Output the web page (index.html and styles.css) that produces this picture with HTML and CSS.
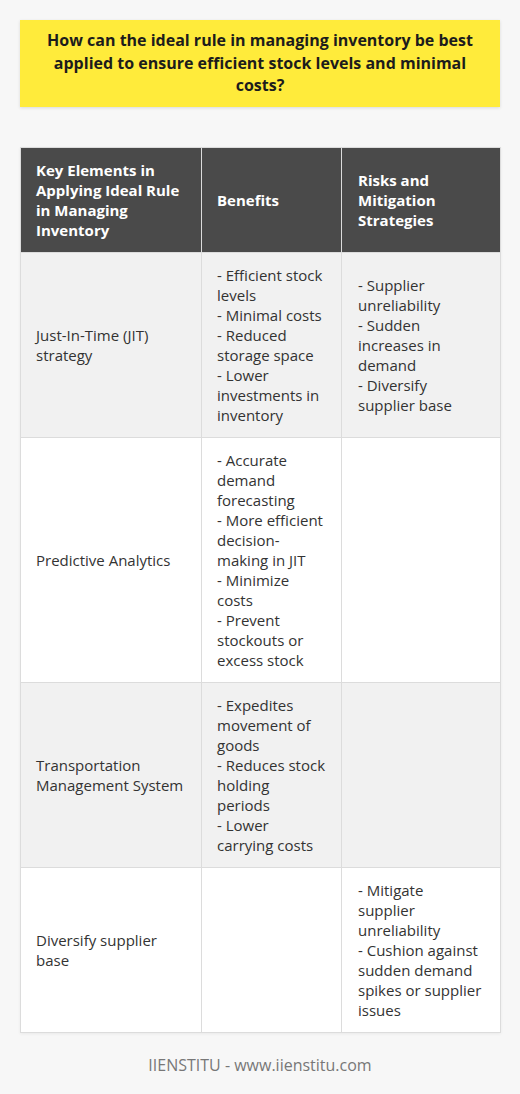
FILE: index.html
```html
<!DOCTYPE html>
<html>
<head>
<meta charset="utf-8">
<link rel="stylesheet" href="styles.css">
</head>
<body>
<div class="page">
  <div class="title">How can the ideal rule in managing inventory be best applied to ensure efficient stock levels and minimal costs?</div>
  <table class="grid">
    <colgroup>
      <col class="c1"><col class="c2"><col class="c3">
    </colgroup>
    <thead>
      <tr>
        <th>Key Elements in Applying Ideal Rule in Managing Inventory</th>
        <th>Benefits</th>
        <th>Risks and Mitigation Strategies</th>
      </tr>
    </thead>
    <tbody>
      <tr class="alt">
        <td>Just-In-Time (JIT) strategy</td>
        <td>- Efficient stock levels<br>- Minimal costs<br>- Reduced storage space<br>- Lower investments in inventory</td>
        <td>- Supplier unreliability<br>- Sudden increases in demand<br>- Diversify supplier base</td>
      </tr>
      <tr>
        <td>Predictive Analytics</td>
        <td>- Accurate demand forecasting<br>- More efficient decision-making in JIT<br>- Minimize costs<br>- Prevent stockouts or excess stock</td>
        <td></td>
      </tr>
      <tr class="alt">
        <td>Transportation Management System</td>
        <td>- Expedites movement of goods<br>- Reduces stock holding periods<br>- Lower carrying costs</td>
        <td></td>
      </tr>
      <tr>
        <td>Diversify supplier base</td>
        <td></td>
        <td>- Mitigate supplier unreliability<br>- Cushion against sudden demand spikes or supplier issues</td>
      </tr>
    </tbody>
  </table>
  <div class="footer">IIENSTITU - www.iienstitu.com</div>
</div>
</body>
</html>
```

FILE: styles.css
```css
html, body {
  margin: 0;
  padding: 0;
  background: #f7f7f7;
}
body {
  font-family: "Open Sans", "Liberation Sans", sans-serif;
  color: #333;
}
.page {
  width: 480px;
  padding: 20px 20px 0;
  display: flex;
  flex-direction: column;
}
.title {
  background: #ffeb3b;
  color: #1c1c1c;
  font-weight: 700;
  font-size: 16px;
  line-height: 22.5px;
  text-align: center;
  padding: 9px 20px 10px;
  box-shadow: 0 1px 3px rgba(0,0,0,0.12);
}
.grid {
  margin-top: 40px;
  width: 480px;
  border-collapse: collapse;
  table-layout: fixed;
  font-size: 15px;
  line-height: 20px;
  box-shadow: 0 1px 3px rgba(0,0,0,0.06);
}
.c1 { width: 181px; }
.c2 { width: 140px; }
.c3 { width: 159px; }
.grid th, .grid td {
  border: 1px solid #dcdcdc;
  padding: 12px 15px;
  text-align: left;
  vertical-align: middle;
}
.grid th:nth-child(3), .grid td:nth-child(3) {
  padding-left: 16px;
  padding-right: 18px;
}
.grid th {
  background: #4a4a4a;
  color: #fff;
  font-weight: 700;
}
.grid td {
  background: #fff;
  color: #333;
}
.grid tr.alt td {
  background: #f1f1f1;
}
.footer {
  text-align: center;
  color: #777;
  font-size: 16px;
  line-height: 22px;
  margin-top: 21px;
}
```
